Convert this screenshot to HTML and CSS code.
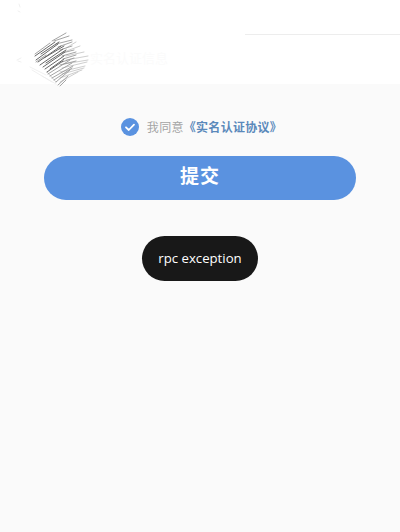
FILE: index.html
```html
<!DOCTYPE html>
<html lang="zh">
<head>
<meta charset="utf-8">
<title>实名认证</title>
<link rel="stylesheet" href="styles.css">
</head>
<body>
<div class="page">
  <header class="head">
    <div class="rule"></div>
    <span class="ghost">实名认证信息</span>
    <svg class="scribble" width="110" height="90" viewBox="0 0 110 90" aria-hidden="true">
      <g class="faint">
        <path d="M19 4l1 3M18 11l2 1M17 60l4-2M21 62l-3-1"/>
        <path d="M32 70l20 12M30 67l16 8M42 76l14 8"/>
      </g>
      <g class="light">
        <path d="M66 48L76 42M64 52L80 46M66 56L84 52M66 60L88 56M64 64L88 60M62 68L87 62M60 72L85 66M62 74L84 68M60 78L82 70M60 82L78 72M47 72L56 82"/>
      </g>
      <g class="mid">
        <path d="M52 41L66 33M54 41L69 36M56 44L72 40M58 47L72 42M60 50L72 46M62 53L74 50M62 56L76 52M63 59L76 55M62 62L74 58M60 65L76 61M48 74L70 60M50 76L72 63M52 78L73 66M54 80L72 68M56 82L70 70M58 85L68 76M60 86L66 80M35 54L50 43M36 62L46 55"/>
      </g>
      <g class="dark">
        <path d="M35 56L55 42M36 60L58 44M38 62L61 46M40 65L63 49M43 67L65 52M45 69L64 56M47 72L63 61M44 58L64 46M41 54L59 42M46 63L66 50M50 69L64 59"/>
      </g>
    </svg>
  </header>
  <main class="content">
    <div class="agree">
      <svg class="check" width="18" height="18" viewBox="0 0 18 18" aria-hidden="true">
        <circle cx="9" cy="9" r="9" fill="#5a92e0"/>
        <path d="M5 9.3l2.8 2.7L13 6.6" fill="none" stroke="#fff" stroke-width="1.8" stroke-linecap="round" stroke-linejoin="round"/>
      </svg>
      <span class="agree-text">我同意<span class="link">《实名认证协议》</span></span>
    </div>
    <button class="submit" type="button"><span class="submit-label">提交</span></button>
  </main>
  <div class="toast">rpc exception</div>
</div>
</body>
</html>
```
FILE: styles.css
```css
* { box-sizing: border-box; }
html, body { margin: 0; height: 100%; }
body { background: #fafafa; font-family: "Noto Sans CJK SC", "Noto Sans", sans-serif; overflow: hidden; }
.page { position: relative; height: 532px; }
.head { position: relative; height: 84px; background: #fff; }
.rule { position: absolute; top: 34px; left: 245px; right: 0; height: 1px; background: #ededed; }
.scribble { position: absolute; left: 0; top: 0; filter: blur(.4px); }
.scribble path { fill: none; stroke-linecap: round; }
.faint path { stroke: #ececec; stroke-width: .8; }
.light path { stroke: #c8c8c8; stroke-width: .9; }
.mid path { stroke: #9a9a9a; stroke-width: .9; }
.dark path { stroke: #666; stroke-width: 1; }
.ghost { position: absolute; left: 90px; top: 49px; font-size: 13px; line-height: 18px; color: #fbfbfb; }
.content { display: flex; flex-direction: column; align-items: center; padding-top: 34px; }
.agree { display: flex; align-items: center; gap: 8px; height: 18px; margin-left: 3px; }
.check { display: block; flex: none; }
.agree-text { font-size: 12px; letter-spacing: .3px; line-height: 18px; color: #a4a4a4; white-space: nowrap; }
.link { color: #5b89bb; font-weight: 700; }
.submit { display: block; width: 312px; height: 44px; margin-top: 20px; border: 0; padding: 0 0 6px; border-radius: 22px; background: #5a92e0; color: #fff; font-family: inherit; font-size: 19px; font-weight: 700; letter-spacing: 1px; }
.submit-label { display: block; line-height: 28px; }
.toast { position: absolute; left: 142px; top: 236px; width: 116px; height: 45px; border-radius: 22.5px; background: #181818; color: #fff; font-family: "Open Sans", sans-serif; font-size: 13.2px; line-height: 44px; text-align: center; }
```
